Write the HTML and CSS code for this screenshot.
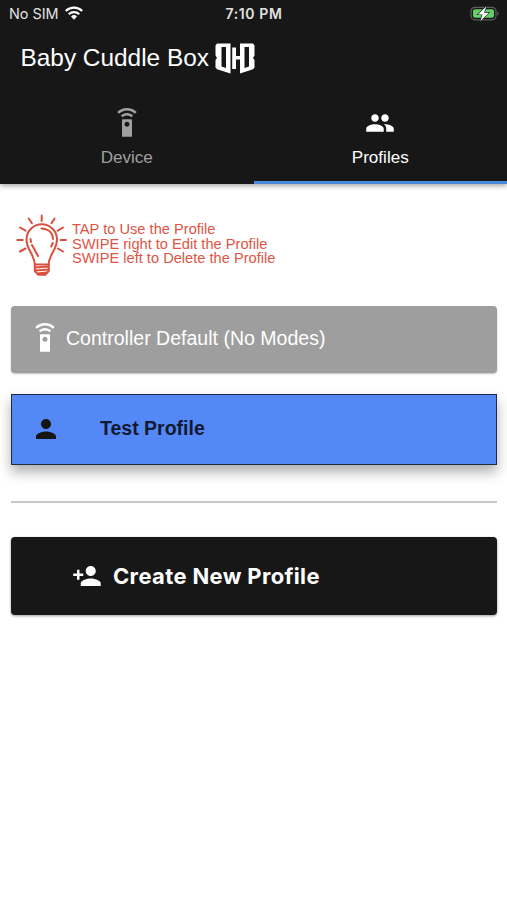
FILE: index.html
```html
<!DOCTYPE html>
<html lang="en">
<head>
<meta charset="utf-8">
<title>Baby Cuddle Box</title>
<link rel="stylesheet" href="styles.css">
</head>
<body>
<svg class="symbols" aria-hidden="true">
  <symbol id="remote" viewBox="0 0 24 24"><path d="M15.500 9h-7c-.3 0-.5.2-.5.5v13c0 .3.2.5.5.5h7c.3 0 .5-.2.5-.5v-13c0-.3-.2-.5-.5-.5zM12 15c-1.100 0-2-.9-2-2s.9-2 2-2 2 .9 2 2-.9 2-2 2zM7.050 6.050l1.410 1.410C9.370 6.560 10.620 6 12 6s2.630.56 3.540 1.460l1.410-1.410C15.680 4.780 13.930 4 12 4s-3.680.78-4.950 2.050zM12 0C8.960 0 6.210 1.230 4.220 3.220l1.410 1.410C7.260 3.010 9.510 2 12 2s4.740 1.010 6.360 2.640l1.410-1.410C17.790 1.230 15.040 0 12 0z"/></symbol>
</svg>
<header class="header">
  <div class="status">
    <div class="carrier"><span>No SIM</span>
      <svg class="wifi" viewBox="0 0 18 14"><g fill="none" stroke="#fff" stroke-width="2.300"><path d="M.8 5a11.700 11.700 0 0 1 16.400 0"/><path d="M3.800 8.200a7.400 7.400 0 0 1 10.400 0"/></g><path fill="#fff" d="M6 10.500a4.300 4.300 0 0 1 6 0L9 13.700z"/></svg>
    </div>
    <span class="time">7:10 PM</span>
    <svg class="battery" viewBox="0 0 31 16"><rect x="2" y="1.300" width="25" height="12.500" rx="4" fill="none" stroke="#5d5d5d" stroke-width="1.300"/><path d="M28.500 5.500c1.800.7 1.800 3.500 0 4.200z" fill="#5d5d5d"/><rect x="4" y="3.300" width="21" height="8.500" rx="2" fill="#62d267"/><path d="M17.300.3 9 8.500h4.500l-2.200 6.700 8.500-8.500h-4.700z" fill="#fff" stroke="#171717" stroke-width="1.200" paint-order="stroke"/></svg>
  </div>
  <div class="titlebar">
    <h1>Baby Cuddle Box</h1>
    <svg class="logo" viewBox="0 0 40 32"><g fill="#fff" fill-rule="evenodd"><path d="M2 .5h13.500v30L2 26.300.5 24.500V17L2 15 .5 12.500V2.500zM6.500 4v19.500l4.500 1.500V4z"/><path d="M38 .5H25V13h-4V4.500h-3.800V26H21v-9.500h4v14l13-4.200 1.500-1.800V17L38 15l1.500-2.500v-10zM29.500 4h4.500v19.500l-4.500 1.500z"/></g></svg>
  </div>
  <nav class="tabs">
    <a class="tab"><svg class="icon"><use href="#remote"/></svg><span>Device</span></a>
    <a class="tab active"><svg class="icon" viewBox="0 0 24 24"><path d="M16 11c1.660 0 2.990-1.340 2.990-3S17.660 5 16 5s-3 1.340-3 3 1.340 3 3 3zm-8 0c1.660 0 2.990-1.340 2.990-3S9.660 5 8 5 5 6.340 5 8s1.340 3 3 3zm0 2c-2.330 0-7 1.170-7 3.500V19h14v-2.500C15 14.170 10.330 13 8 13zm8 0c-.29 0-.62.02-.97.05 1.160.84 1.970 1.970 1.970 3.450V19h6v-2.500c0-2.330-4.670-3.500-7-3.500z"/></svg><span>Profiles</span></a>
  </nav>
</header>
<main>
  <section class="hint">
    <svg class="bulb" viewBox="0 0 52 64"><g fill="none" stroke="#d9503f" stroke-width="2" stroke-linecap="round" stroke-linejoin="round"><path d="M18.800 50.500C18.300 40 10.500 36 10.500 25.500a15 15 0 0 1 30.500 0C41 36 33 40 32.600 50.500z"/><path d="M18.800 50.500v6.500l3.500 3.800h7l3.500-3.800v-6.500M19.500 53.500l13-1M19.500 56.500l13-1M21.500 59.500l9-1"/><path d="M25.500 14.500c7 .2 11.200 4.500 11.500 10.500M36.800 29l-1.600 3.500M14.500 25l.5 3M16 31l6 11"/><path d="M25.700 1.500v5.500M12.700 4.500l3.200 4.700M38.500 4.500l-3 4.700M4 13.500l5.500 3.200M47 13.500l-5.200 3.200M1.200 26h5.500M44.500 26h5.500M4 37.500l5.500-3M47 37.500l-5.200-3"/></g></svg>
    <p>TAP to Use the Profile<br>SWIPE right to Edit the Profile<br>SWIPE left to Delete the Profile</p>
  </section>
  <div class="card default"><svg class="icon"><use href="#remote"/></svg><span>Controller Default (No Modes)</span></div>
  <div class="card profile"><svg class="icon" viewBox="0 0 24 24"><path d="M12 12c2.210 0 4-1.790 4-4s-1.790-4-4-4-4 1.790-4 4 1.790 4 4 4zm0 2c-2.670 0-8 1.340-8 4v2h16v-2c0-2.660-5.330-4-8-4z"/></svg><span>Test Profile</span></div>
  <hr>
  <button class="card create"><svg class="icon" viewBox="0 0 24 24"><path d="M15 12c2.210 0 4-1.790 4-4s-1.790-4-4-4-4 1.790-4 4 1.790 4 4 4zm-9-2V7H4v3H1v2h3v3h2v-3h3v-2H6zm9 4c-2.670 0-8 1.340-8 4v2h16v-2c0-2.660-5.330-4-8-4z"/></svg><span>Create New Profile</span></button>
</main>
</body>
</html>
```
FILE: styles.css
```css
* { box-sizing: border-box; }
body { margin: 0; min-height: 900px; background: #fff; font-family: "Liberation Sans", Arial, sans-serif; }
.symbols { position: absolute; width: 0; height: 0; }
.icon { width: 30px; height: 30px; flex: none; fill: currentColor; }
.header { height: 184px; background: #171717; color: #fff; box-shadow: 0 2px 5px rgba(0,0,0,.35); }
.status { display: grid; grid-template-columns: 1fr auto 1fr; align-items: center; height: 28px; padding: 0 7px 0 9px; font: 14.400px/28px Inter, sans-serif; color: #e2e2e2; }
.carrier { display: flex; align-items: center; gap: 6px; }
.wifi { width: 18px; height: 14px; margin-top: -2px; }
.time { font-weight: 600; font-size: 14px; letter-spacing: .6px; margin-left: -1px; }
.battery { width: 31px; height: 16px; justify-self: end; margin-top: -1px; }
.titlebar { display: flex; height: 62px; padding: 15px 0 0 20.500px; }
h1 { margin: 0; font-size: 24.400px; line-height: 30px; font-weight: 400; white-space: nowrap; }
.logo { width: 40px; height: 32px; margin-left: 6px; }
.tabs { display: flex; height: 94px; }
.tab { flex: 1; display: flex; flex-direction: column; align-items: center; padding-top: 18px; gap: 10px; color: #a0a0a0; font-size: 17.100px; line-height: 20px; }
.tab.active { color: #fff; border-bottom: 3px solid #4a8add; }
main { padding: 30px 10px 0 11px; }
.hint { display: flex; height: 92px; padding-left: 5px; }
.bulb { width: 52px; height: 64px; flex: none; }
.hint p { margin: 8px 0 0 4px; color: #de5546; font-size: 14.650px; line-height: 14.700px; white-space: nowrap; }
.card { display: flex; align-items: center; width: 486px; white-space: nowrap; }
.default { height: 67px; padding: 0 0 3px 19px; gap: 6px; border-radius: 4px; background: #9e9e9e; color: #fff; font-size: 19.550px; box-shadow: 0 1px 2px rgba(0,0,0,.25); }
.profile { height: 71px; margin-top: 21px; padding: 0 0 2px 19px; gap: 39px; border: 1.500px solid #202a44; background: #5588f7; color: #111a30; font-size: 19.500px; font-weight: 700; box-shadow: 0 7px 12px rgba(0,0,0,.32); }
.profile .icon { color: #151515; }
hr { height: 2px; margin: 36px 0 34px; border: 0; background: #c8c8c8; }
.create { height: 78px; padding: 0 0 0 61px; gap: 11px; border: 0; border-radius: 4px; background: #171717; color: #fff; font: 700 22px Inter, sans-serif; letter-spacing: .35px; box-shadow: 0 1px 3px rgba(0,0,0,.4); }
```
